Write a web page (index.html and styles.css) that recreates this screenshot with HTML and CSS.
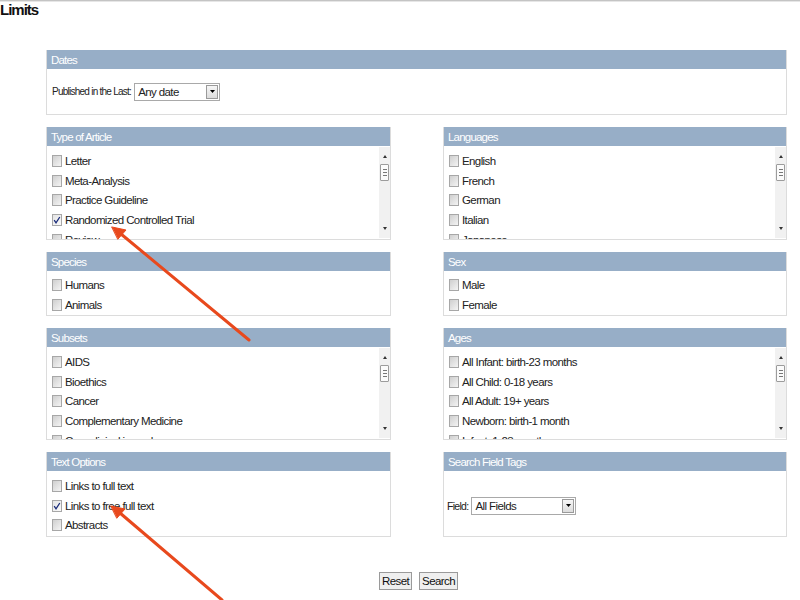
FILE: index.html
```html
<!DOCTYPE html>
<html>
<head>
<meta charset="utf-8">
<title>Limits</title>
<link rel="stylesheet" href="styles.css">
</head>
<body>
<div class="topline"></div>
<h1 class="title">Limits</h1>
<div class="grid">
  <section class="panel dates">
    <div class="phead">Dates</div>
    <div class="pbody inline">
      <span class="lbl">Published in the Last:</span>
      <div class="select sel-date"><span class="sv">Any date</span><span class="sarrow"><svg width="5" height="3" viewBox="0 0 5 3"><path d="M0 0H5L2.5 3Z" fill="#000"/></svg></span></div>
    </div>
  </section>

  <section class="panel tall">
    <div class="phead">Type of Article</div>
    <div class="scrollwrap">
      <ul class="list">
        <li><span class="cb"></span>Letter</li>
        <li><span class="cb"></span>Meta-Analysis</li>
        <li><span class="cb"></span>Practice Guideline</li>
        <li><span class="cb on"><svg width="8" height="8" viewBox="0 0 8 8"><path d="M1.2 4.2L3 6.8L6.8 1" fill="none" stroke="#1a2c7a" stroke-width="1.3"/></svg></span>Randomized Controlled Trial</li>
        <li><span class="cb"></span>Review</li>
      </ul>
      <div class="sbar"><span class="up"></span><span class="thumb"><i></i><i></i><i></i></span><span class="down"></span></div>
    </div>
  </section>
  <section class="panel tall">
    <div class="phead">Languages</div>
    <div class="scrollwrap">
      <ul class="list">
        <li><span class="cb"></span>English</li>
        <li><span class="cb"></span>French</li>
        <li><span class="cb"></span>German</li>
        <li><span class="cb"></span>Italian</li>
        <li><span class="cb"></span>Japanese</li>
      </ul>
      <div class="sbar"><span class="up"></span><span class="thumb"><i></i><i></i><i></i></span><span class="down"></span></div>
    </div>
  </section>

  <section class="panel short">
    <div class="phead">Species</div>
    <ul class="list plain">
      <li><span class="cb"></span>Humans</li>
      <li><span class="cb"></span>Animals</li>
    </ul>
  </section>
  <section class="panel short">
    <div class="phead">Sex</div>
    <ul class="list plain">
      <li><span class="cb"></span>Male</li>
      <li><span class="cb"></span>Female</li>
    </ul>
  </section>

  <section class="panel tall">
    <div class="phead">Subsets</div>
    <div class="scrollwrap">
      <ul class="list">
        <li><span class="cb"></span>AIDS</li>
        <li><span class="cb"></span>Bioethics</li>
        <li><span class="cb"></span>Cancer</li>
        <li><span class="cb"></span>Complementary Medicine</li>
        <li><span class="cb"></span>Core clinical journals</li>
      </ul>
      <div class="sbar"><span class="up"></span><span class="thumb"><i></i><i></i><i></i></span><span class="down"></span></div>
    </div>
  </section>
  <section class="panel tall">
    <div class="phead">Ages</div>
    <div class="scrollwrap">
      <ul class="list">
        <li><span class="cb"></span>All Infant: birth-23 months</li>
        <li><span class="cb"></span>All Child: 0-18 years</li>
        <li><span class="cb"></span>All Adult: 19+ years</li>
        <li><span class="cb"></span>Newborn: birth-1 month</li>
        <li><span class="cb"></span>Infant: 1-23 months</li>
      </ul>
      <div class="sbar"><span class="up"></span><span class="thumb"><i></i><i></i><i></i></span><span class="down"></span></div>
    </div>
  </section>

  <section class="panel last">
    <div class="phead">Text Options</div>
    <ul class="list plain opts">
      <li><span class="cb"></span>Links to full text</li>
      <li><span class="cb on"><svg width="8" height="8" viewBox="0 0 8 8"><path d="M1.2 4.2L3 6.8L6.8 1" fill="none" stroke="#1a2c7a" stroke-width="1.3"/></svg></span>Links to free full text</li>
      <li><span class="cb"></span>Abstracts</li>
    </ul>
  </section>
  <section class="panel last">
    <div class="phead">Search Field Tags</div>
    <div class="pbody inline fieldbody">
      <span class="lbl">Field:</span>
      <div class="select sel-field"><span class="sv">All Fields</span><span class="sarrow"><svg width="5" height="3" viewBox="0 0 5 3"><path d="M0 0H5L2.5 3Z" fill="#000"/></svg></span></div>
    </div>
  </section>

  <div class="buttons">
    <button class="btn">Reset</button>
    <button class="btn">Search</button>
  </div>
</div>

<svg class="arrows" width="800" height="600" viewBox="0 0 800 600">
  <g stroke="#e8491d" stroke-width="3" stroke-linecap="round" fill="#e8491d">
    <line x1="249" y1="340" x2="121" y2="234"/>
    <polygon points="112,227 126,230 118,239" stroke-width="1"/>
    <line x1="222" y1="600" x2="120" y2="513"/>
    <polygon points="111,506 125,509 117,518" stroke-width="1"/>
  </g>
</svg>
</body>
</html>
```

FILE: styles.css
```css
html, body {
  margin: 0;
  padding: 0;
  background: #fff;
}
body {
  width: 800px;
  height: 600px;
  overflow: hidden;
  position: relative;
  font-family: "Liberation Sans", Arial, sans-serif;
  color: #222;
}
.topline {
  height: 1px;
  background: #c4c4c4;
  border-bottom: 1px solid #e6e6e6;
}
.title {
  margin: 0;
  font-size: 15px;
  line-height: 16px;
  font-weight: bold;
  letter-spacing: -1px;
  color: #111;
  height: 16px;
}
.grid {
  margin: 32px 0 0 46px;
  width: 741px;
  display: grid;
  grid-template-columns: 345px 344px;
  grid-template-rows: 65px 113px 64px 112px 85px;
  column-gap: 52px;
  row-gap: 12px;
}
.panel {
  border: 1px solid #dcdcdc;
  border-top: 0;
  display: flex;
  flex-direction: column;
  box-sizing: border-box;
  background: #fff;
  min-height: 0;
}
.dates {
  grid-column: 1 / 3;
}
.phead {
  height: 19px;
  flex: none;
  background: #97aec7;
  color: #fff;
  font-size: 11.5px;
  line-height: 20px;
  padding-left: 4px;
  letter-spacing: -0.8px;
}
.pbody {
  font-size: 11px;
}
.inline {
  display: flex;
  align-items: center;
  padding-left: 5px;
  flex: 1;
}
.lbl {
  margin-right: 3px;
  font-size: 10px;
  letter-spacing: -0.75px;
}
.select {
  height: 18px;
  box-sizing: border-box;
  border: 1px solid #a9a9a9;
  display: flex;
  align-items: stretch;
  background: #fff;
}
.sel-date { width: 86px; }
.sel-field { width: 105px; }
.sv {
  flex: 1;
  padding-left: 3px;
  line-height: 17px;
  font-size: 11.5px;
  letter-spacing: -0.6px;
}
.sarrow {
  width: 10px;
  margin: 1px;
  border: 1px solid #9a9a9a;
  background: linear-gradient(#f6f6f6, #dcdcdc);
  display: flex;
  align-items: center;
  justify-content: center;
}
.fieldbody {
  padding-left: 3px;
  padding-top: 4px;
}
.fieldbody .lbl {
  font-size: 10.5px;
  letter-spacing: -0.7px;
}
.scrollwrap {
  flex: 1;
  display: flex;
  min-height: 0;
}
.list {
  list-style: none;
  margin: 0;
  padding: 5px 0 0 5px;
  flex: 1;
  overflow: hidden;
  font-size: 11.5px;
  letter-spacing: -0.6px;
  color: #222;
}
.list.plain {
  padding-top: 4px;
}
.list.opts {
  padding-top: 5px;
}
.list li {
  height: 19.7px;
  display: flex;
  align-items: center;
  white-space: nowrap;
}
.cb {
  width: 8px;
  height: 10px;
  border: 1px solid #a7a7a7;
  background: linear-gradient(135deg, #cfcfcf, #f4f4f4);
  margin-right: 3px;
  flex: none;
  display: flex;
  align-items: center;
  justify-content: center;
}
.cb.on {
  background: linear-gradient(135deg, #e4e4e4, #fafafa);
}
.sbar {
  width: 11px;
  margin: 1px 0 1px 0;
  background: #f1f1f1;
  display: flex;
  flex-direction: column;
  align-items: center;
}
.sbar .up {
  margin-top: 8px;
  width: 0;
  height: 0;
  border-left: 2.5px solid transparent;
  border-right: 2.5px solid transparent;
  border-bottom: 3px solid #333;
}
.sbar .thumb {
  margin-top: 6px;
  width: 7px;
  height: 15px;
  border: 1px solid #9c9c9c;
  border-radius: 1px;
  background: #fbfbfb;
  display: flex;
  flex-direction: column;
  justify-content: center;
  align-items: center;
  gap: 2px;
}
.sbar .thumb i {
  display: block;
  width: 4px;
  height: 1px;
  background: #777;
}
.sbar .down {
  margin-top: auto;
  margin-bottom: 8px;
  width: 0;
  height: 0;
  border-left: 2.5px solid transparent;
  border-right: 2.5px solid transparent;
  border-top: 3px solid #333;
}
.buttons {
  grid-column: 1 / 3;
  display: flex;
  justify-content: center;
  gap: 7px;
  margin-top: 23px;
  padding-left: 4px;
}
.btn {
  font-family: inherit;
  font-size: 11.5px;
  letter-spacing: -0.6px;
  height: 18px;
  padding: 0 2px;
  border: 1px solid #9a9a9a;
  background: #efefef;
  color: #111;
  line-height: 16px;
  border-radius: 0;
}
.arrows {
  position: absolute;
  left: 0;
  top: 0;
  pointer-events: none;
}
```
